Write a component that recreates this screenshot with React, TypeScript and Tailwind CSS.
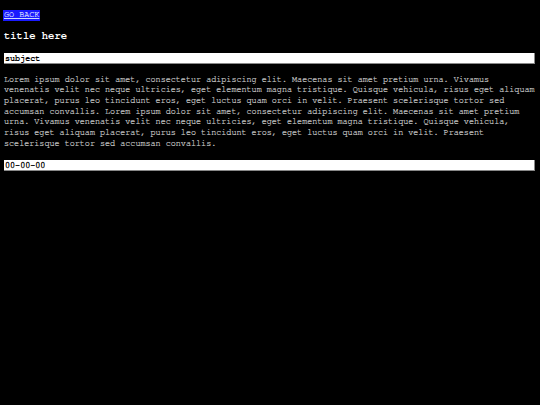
export default function App() {
  const lorem =
    "Lorem ipsum dolor sit amet, consectetur adipiscing elit. Maecenas sit amet pretium urna. Vivamus venenatis velit nec neque ultricies, eget elementum magna tristique. Quisque vehicula, risus eget aliquam placerat, purus leo tincidunt eros, eget luctus quam orci in velit. Praesent scelerisque tortor sed accumsan convallis. Lorem ipsum dolor sit amet, consectetur adipiscing elit. Maecenas sit amet pretium urna. Vivamus venenatis velit nec neque ultricies, eget elementum magna tristique. Quisque vehicula, risus eget aliquam placerat, purus leo tincidunt eros, eget luctus quam orci in velit. Praesent scelerisque tortor sed accumsan convallis.";
  return (
    <div className="min-h-[405px] w-[540px] bg-black px-[4px] pt-[10px] font-['Nimbus_Mono_PS','FreeMono','Liberation_Mono',monospace] text-[8.43px] leading-[10.67px] text-[#c4c4c4]">
      <div className="flex">
        <a href="#" className="-ml-[1px] bg-[#1a1aff] px-[1px] text-[#d0dcff] underline [-webkit-text-stroke:0.2px]">GO BACK</a>
      </div>
      <h1 className="mt-[9px] text-[10.5px] font-bold leading-[12px] text-white">title here</h1>
      <div className="mt-[11px] h-[11px] w-[531px] border-b border-r border-[#888] bg-white pl-[1px] font-bold leading-[11px] text-black">
        subject
      </div>
      <p className="mt-[11px] w-[533px] [-webkit-text-stroke:0.2px]">{lorem}</p>
      <div className="mt-[11px] h-[11px] w-[531px] border-b border-r border-[#888] bg-white pl-[1px] leading-[11px] text-black [-webkit-text-stroke:0.35px]">
        00-00-00
      </div>
    </div>
  );
}
